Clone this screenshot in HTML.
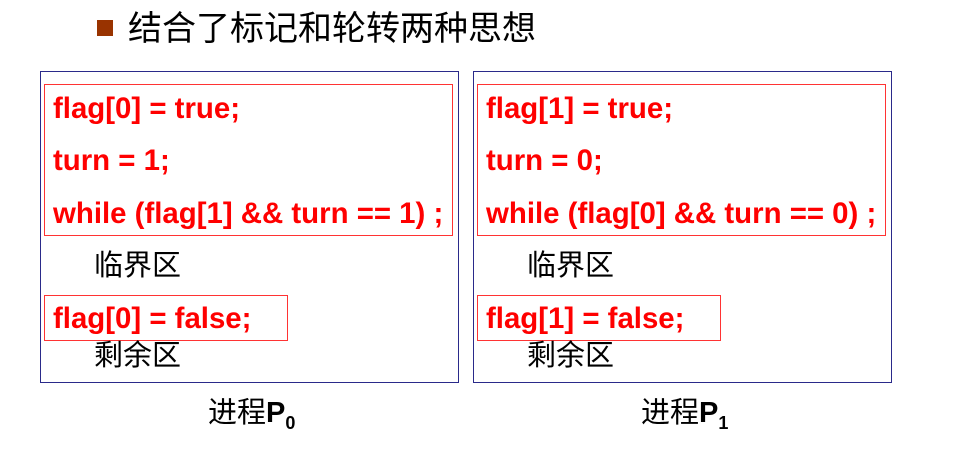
<!DOCTYPE html>
<html><head><meta charset="utf-8"><style>
body{margin:0;width:960px;height:450px;background:#fff;position:relative;overflow:hidden;font-family:"Liberation Sans","Noto Sans CJK SC",sans-serif}
.a{position:absolute;white-space:nowrap}
.ob{position:absolute;border:1.5px solid #2a2a8a;box-sizing:border-box}
.rb{position:absolute;border:1.5px solid #ff3333;box-sizing:border-box}
.c{position:absolute;color:#ff0000;font-weight:bold;font-size:29.4px;line-height:30px;white-space:nowrap}
.z{position:absolute;font-size:29px;line-height:30px;color:#000;white-space:nowrap}
.p{position:absolute;font-size:29px;line-height:30px;color:#000;white-space:nowrap}
.p sub{font-size:18px;font-weight:bold;vertical-align:-7px}
</style></head><body>
<div class="a" style="left:97px;top:20px;width:16px;height:16px;background:#993300"></div>
<div class="a" style="left:128px;top:10px;font-size:34px;line-height:38px">结合了标记和轮转两种思想</div>

<div class="ob" style="left:40px;top:71px;width:419px;height:312px"></div>
<div class="rb" style="left:44px;top:84px;width:409px;height:152px"></div>
<div class="rb" style="left:44px;top:295px;width:244px;height:46px"></div>
<div class="c" style="left:53px;top:94px">flag[0] = true;</div>
<div class="c" style="left:53px;top:146px">turn = 1;</div>
<div class="c" style="left:53px;top:199px">while (flag[1] &amp;&amp; turn == 1) ;</div>
<div class="z" style="left:94px;top:251px">临界区</div>
<div class="c" style="left:53px;top:304px">flag[0] = false;</div>
<div class="z" style="left:94px;top:341px">剩余区</div>
<div class="p" style="left:208px;top:398px">进程<b>P</b><sub>0</sub></div>

<div class="ob" style="left:473px;top:71px;width:419px;height:312px"></div>
<div class="rb" style="left:477px;top:84px;width:409px;height:152px"></div>
<div class="rb" style="left:477px;top:295px;width:244px;height:46px"></div>
<div class="c" style="left:486px;top:94px">flag[1] = true;</div>
<div class="c" style="left:486px;top:146px">turn = 0;</div>
<div class="c" style="left:486px;top:199px">while (flag[0] &amp;&amp; turn == 0) ;</div>
<div class="z" style="left:527px;top:251px">临界区</div>
<div class="c" style="left:486px;top:304px">flag[1] = false;</div>
<div class="z" style="left:527px;top:341px">剩余区</div>
<div class="p" style="left:641px;top:398px">进程<b>P</b><sub>1</sub></div>
</body></html>
